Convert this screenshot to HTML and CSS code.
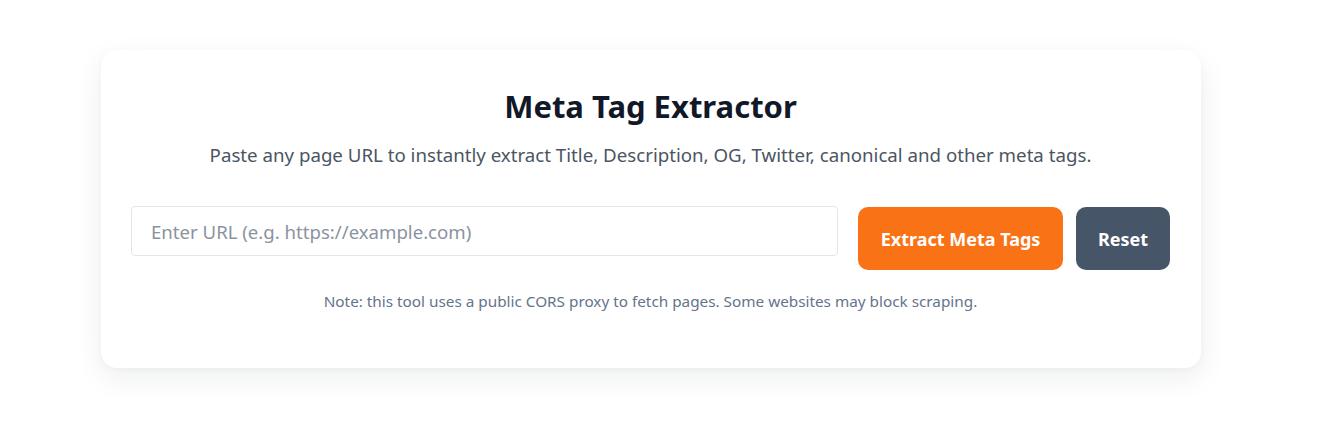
FILE: index.html
```html
<!DOCTYPE html>
<html>
<head>
<meta charset="utf-8">
<link rel="stylesheet" href="styles.css">
</head>
<body>
<div class="page">
  <div class="card">
    <h1 class="title">Meta Tag Extractor</h1>
    <p class="subtitle">Paste any page URL to instantly extract Title, Description, OG, Twitter, canonical and other meta tags.</p>
    <div class="form-row">
      <input class="url-input" type="text" placeholder="Enter URL (e.g. https://example.com)">
      <button class="btn btn-primary">Extract Meta Tags</button>
      <button class="btn btn-secondary">Reset</button>
    </div>
    <p class="note">Note: this tool uses a public CORS proxy to fetch pages. Some websites may block scraping.</p>
  </div>
</div>
</body>
</html>
```
FILE: styles.css
```css
* { box-sizing: border-box; }
html, body { margin: 0; padding: 0; background: #ffffff; }
body {
  font-family: "Noto Sans", "Open Sans", sans-serif;
  color: #0f172a;
}
.page {
  padding: 50px 24px 50px 0;
  display: flex;
  justify-content: center;
}
.card {
  width: 1100px;
  height: 318px;
  background: #fff;
  border-radius: 16px;
  box-shadow: 0 10px 30px rgba(15, 23, 42, 0.07), 0 2px 6px rgba(15, 23, 42, 0.03);
  padding: 34px 31px 0 30px;
}
.title {
  margin: 0;
  text-align: center;
  font-size: 31px;
  font-weight: 700;
  line-height: 44px;
  color: #111827;
}
.subtitle {
  margin: 13px 0 0;
  text-align: center;
  font-size: 18.7px;
  line-height: 28px;
  color: #4b5563;
}
.form-row {
  display: flex;
  align-items: flex-start;
  margin-top: 37px;
}
.url-input {
  flex: 1;
  height: 50px;
  border: 1px solid #e2e5ea;
  border-radius: 4px;
  padding: 0 19px;
  font-family: inherit;
  font-size: 18.6px;
  color: #111827;
  outline: none;
  margin-right: 20px;
}
.url-input::placeholder { color: #8a939f; }
.btn {
  height: 63px;
  margin-top: 1px;
  border: none;
  border-radius: 10px;
  color: #fff;
  font-family: inherit;
  font-size: 18px;
  font-weight: 700;
  padding: 0 22px;
}
.btn-primary { background: #f97316; width: 205px; margin-right: 13px; }
.btn-secondary { background: #475569; width: 94px; }
.note {
  margin: 20px 0 0;
  text-align: center;
  font-size: 15.3px;
  line-height: 22px;
  color: #64748b;
}
```
